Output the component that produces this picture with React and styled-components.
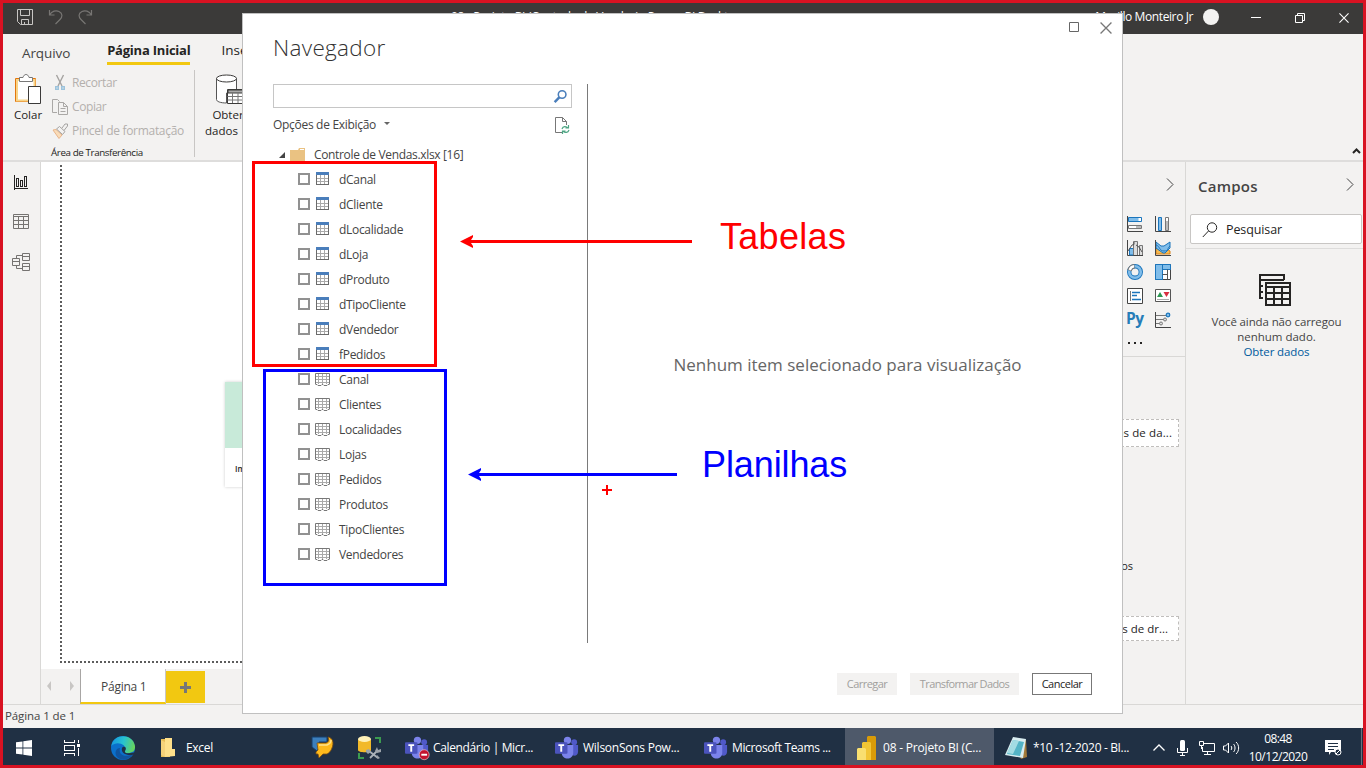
import React from "react";
import styled, { createGlobalStyle } from "styled-components";

const Global = createGlobalStyle`
  *{box-sizing:border-box}
  body{margin:0;overflow:hidden}
  svg{display:block;flex:none;overflow:visible}
`;
const Screen = styled.div`
  position:relative;width:1366px;height:768px;border:3px solid #d81222;overflow:hidden;
  display:flex;flex-direction:column;background:#f3f2f1;color:#252423;
  font-family:"Open Sans","Noto Sans",sans-serif;font-size:12px;
`;
const Text = styled.span`
  display:block;white-space:nowrap;flex:none;
  font-size:${p => p.$size || 12}px;line-height:${p => p.$lh || 16}px;
  letter-spacing:${p => p.$ls || 0}px;font-weight:${p => p.$weight || 400};
  color:${p => p.$color || "inherit"};
`;

/* Title bar */
const TitleBar = styled.header`
  height:31px;flex:none;background:#3b3a39;color:#fff;display:flex;align-items:center;padding-left:14px;
`;
const QuickAccess = styled.div`display:flex;align-items:center;gap:15px;width:198px;padding-bottom:3px;`;
const TitleText = styled.div`flex:1;padding:0 0 4px 236px;`;
const Account = styled.div`display:flex;align-items:center;gap:10px;padding-bottom:3px;`;
const Avatar = styled.div`width:16px;height:16px;border-radius:50%;background:#f3f2f1;`;
const WindowButtons = styled.div`display:flex;align-items:center;gap:34px;margin:0 14px 2px 32px;`;

/* Ribbon */
const Ribbon = styled.div`
  height:128px;flex:none;border-bottom:2px solid #dedddc;background:#f3f2f1;display:flex;flex-direction:column;
`;
const Tabs = styled.nav`display:flex;height:36px;padding:6px 0 0 19px;align-items:flex-start;`;
const Tab = styled.div`
  margin-right:${p => p.$gap || 0}px;padding-top:${p => p.$top || 0}px;height:25px;
  border-bottom:${p => p.$active ? "3px solid #f2c811" : "0"};
`;
const RibbonBody = styled.div`display:flex;flex:1;`;
const ClipboardGroup = styled.section`
  width:192px;height:87px;border-right:1px solid #c8c6c4;display:grid;grid-template-columns:49px 1fr;grid-template-rows:75px 1fr;
`;
const BigButton = styled.div`
  display:flex;flex-direction:column;align-items:center;padding-top:4px;width:${p => p.$w || 50}px;
  svg{margin:0 0 2px ${p => p.$shift || 0}px}
`;
const SmallCommands = styled.div`display:flex;flex-direction:column;color:#b3b0ad;padding-top:1px;`;
const SmallCommand = styled.div`display:flex;align-items:center;gap:4px;height:24px;`;
const GroupName = styled.div`grid-column:1 / 3;padding-left:48px;`;
const Collapse = styled.div`margin-left:auto;align-self:flex-end;padding:0 2px 6px 0;`;

/* Work area */
const Work = styled.main`height:542px;flex:none;display:flex;`;
const Rail = styled.aside`
  width:38px;flex:none;border-right:1px solid #d9d8d6;display:flex;flex-direction:column;align-items:center;padding:13px 2px 0 0;gap:24px;
`;
const Report = styled.section`width:959px;display:flex;flex-direction:column;background:#fff;`;
const Canvas = styled.div`height:507px;padding:3px 0 0 19px;`;
const ReportPage = styled.div`
  height:498px;padding:217px 0 0 165px;
  background:
    repeating-linear-gradient(to bottom,#5d5d5d 0 2px,transparent 2px 4px) left top / 2px 100% no-repeat,
    repeating-linear-gradient(to right,#5d5d5d 0 2px,transparent 2px 4px) left bottom / 100% 2px no-repeat;
`;
const StartCard = styled.div`width:160px;height:105px;background:#fff;border-top:66px solid #c8ead9;box-shadow:0 0 3px rgba(0,0,0,.2);padding:15px 0 0 10px;`;
const PageTabs = styled.div`height:35px;display:flex;background:#f3f2f1;`;
const PageArrows = styled.div`width:39px;display:flex;justify-content:space-between;padding:12px 5px 0 4px;`;
const PageTab = styled.div`width:86px;border-left:1px solid #a8a6a4;border-right:1px solid #c8c6c4;border-bottom:2px solid #f2c811;background:#fff;padding:10px 0 0 20px;`;
const AddPage = styled.div`width:39px;height:32px;margin-top:2px;background:#f2c811;display:grid;place-items:center;`;

const Visuals = styled.aside`width:186px;border-left:1px solid #d9d8d6;border-right:1px solid #d9d8d6;display:flex;flex-direction:column;flex:none;`;
const PaneTop = styled.div`height:53px;display:flex;justify-content:flex-end;padding:16px 11px 0 0;`;
const VisualGrid = styled.div`
  height:142px;border-bottom:1px solid #d9d8d6;display:grid;grid-template-columns:16px 16px;grid-auto-rows:16px;gap:8px 12px;justify-content:end;padding:1px 14px 0 0;
`;
const PyLabel = styled.div`margin:-2px 0 0 -1px;height:16px;`;
const Well = styled.div`
  height:${p => p.$h}px;margin:${p => p.$top}px 6px 0 10px;border:1px dashed #c0bebc;background:#fff;display:flex;align-items:center;justify-content:flex-end;padding-right:${p => p.$pad}px;
`;
const WellCaption = styled.div`margin:111px 52px 0 0;display:flex;justify-content:flex-end;`;

const Fields = styled.aside`flex:1;display:flex;flex-direction:column;`;
const FieldsHead = styled.div`height:51px;display:flex;justify-content:space-between;padding:12px 9px 0 12px;`;
const FieldsToggle = styled.div`padding-top:4px;`;
const FieldSearchRow = styled.div`height:36px;border-bottom:1px solid #dddcdb;padding:1px 1px 0 4px;`;
const FieldSearch = styled.div`height:30px;border:1px solid #c8c6c4;border-radius:2px;background:#fff;display:flex;align-items:center;gap:8px;padding:1px 0 0 11px;`;
const EmptyFields = styled.div`
  display:flex;flex-direction:column;align-items:center;padding:25px 0 0 4px;
  svg{margin:0 3px 7px 0}
`;

const Status = styled.footer`height:24px;flex:none;border-top:1px solid #d9d8d6;padding:3px 0 0 2px;background:#f3f2f1;`;

/* Navigator dialog */
const Dialog = styled.div`
  position:absolute;left:239px;top:10px;width:881px;height:701px;background:#fff;border:1px solid #c0c0c0;color:#444;
  display:flex;flex-direction:column;
`;
const DialogHead = styled.div`height:70px;display:flex;justify-content:space-between;padding:17px 10px 0 30px;`;
const DialogButtons = styled.div`display:flex;gap:20px;margin-top:-9px;`;
const DialogBody = styled.div`height:559px;display:flex;padding-left:30px;`;
const Tree = styled.div`width:315px;border-right:1px solid #7a7a7a;`;
const SearchBox = styled.div`width:299px;height:24px;border:1px solid #c6c6c6;display:flex;align-items:center;justify-content:flex-end;padding-right:4px;`;
const Options = styled.div`width:297px;height:34px;display:flex;align-items:center;`;
const OptionsCaret = styled.i`border:3px solid transparent;border-top-color:#666;margin:0 auto 0 8px;`;
const FileRow = styled.div`height:25px;display:flex;align-items:center;padding-left:6px;`;
const Leaf = styled.div`height:25px;display:flex;align-items:center;padding-left:25px;`;
const Checkbox = styled.span`width:12px;height:12px;border:2px solid #919191;margin:0 ${p => p.$sheet ? 5 : 6}px 1px 0;`;
const LeafIcon = styled.span`width:${p => p.$sheet ? 24 : 23}px;margin-bottom:${p => p.$sheet ? 0 : 2}px;`;
const Preview = styled.div`flex:1;display:flex;justify-content:center;padding:270px 15px 0 0;`;
const DialogFoot = styled.div`display:flex;justify-content:flex-end;gap:13px;padding:30px 30px 0 0;`;
const DialogButton = styled.div`
  width:${p => p.$w}px;height:22px;display:grid;place-items:center;
  background:${p => p.$primary ? "#fff" : "#f3f2f1"};color:${p => p.$primary ? "#252423" : "#a19f9d"};
  border:1px solid ${p => p.$primary ? "#777" : "#f3f2f1"};
`;

/* Drawn annotations */
const MarkBox = styled.div`
  position:absolute;left:${p => p.$x}px;top:${p => p.$y}px;width:${p => p.$w}px;height:${p => p.$h}px;border:3px solid ${p => p.$c};
`;
const MarkArrow = styled.svg`position:absolute;left:${p => p.$x}px;top:${p => p.$y}px;`;
const MarkText = styled.div`
  position:absolute;left:${p => p.$x}px;top:${p => p.$y}px;color:${p => p.$c};letter-spacing:${p => p.$ls || 0}px;
  font:36px/40px "Liberation Sans",Arial,sans-serif;white-space:nowrap;
`;

/* Taskbar */
const Taskbar = styled.footer`height:37px;flex:none;background:#203044;color:#fff;display:flex;`;
const Task = styled.div`
  width:${p => p.$w}px;flex:none;display:flex;align-items:center;gap:${p => p.$gap || 4}px;padding:2px 0 0 ${p => p.$pad || 0}px;
  background:${p => p.$active ? "#4e596a" : "transparent"};
`;
const Tray = styled.div`flex:1;display:flex;align-items:center;`;
const TrayItem = styled.div`width:${p => p.$w}px;flex:none;padding-top:2px;`;
const Clock = styled.div`width:66px;display:flex;flex-direction:column;align-items:center;padding-top:2px;`;
const ShowDesktop = styled.div`width:1px;height:37px;background:#66717e;margin-left:auto;margin-right:1px;`;

const Chevron = ({ color = "#444" }) => (
  <svg width="8" height="13" viewBox="0 0 8 13" fill="none" stroke={color}><path d="M1 .5l6 6-6 6" /></svg>
);
const Cross = ({ size = 11, color }) => (
  <svg width={size} height={size} viewBox="0 0 11 11" stroke={color} strokeWidth="1.2"><path d="M.5.5l10 10M10.5.5l-10 10" /></svg>
);
const SaveIcon = () => (
  <svg width="16" height="16" viewBox="0 0 16 16" fill="none" stroke="#c8c6c4"><path d="M.5.5h15v15h-12l-3-3zM3.5.5v6h9v-6M4.500 15v-4.500h7V15M7.500 13v2" /></svg>
);
const UndoIcon = ({ flip }) => (
  <svg width="15" height="16" viewBox="0 0 15 16" fill="none" stroke="#777573" strokeWidth="1.2">
    <path transform={flip ? "matrix(-1 0 0 1 15 0)" : undefined} d="M1.500 1v5h5M1.500 6C4 2 8 1 11 2.500c4 2 3.500 5.500 1 8L7.500 15" />
  </svg>
);
const PasteIcon = () => (
  <svg width="28" height="31" viewBox="0 0 28 31">
    <path d="M1.500 4.500h20v23h-20z" fill="#fff" stroke="#e3760c" /><path d="M3 6h17.500v20.500H3z" fill="none" stroke="#f8d488" strokeWidth="2" />
    <path d="M5.500 7.500v-4h3.500c1-4 5-4 6 0h3.500v4z" fill="#fff" stroke="#777" />
    <path d="M14 12h14v19h-14z" fill="#f3f2f1" />
    <path d="M14.500 12.500h12v17h-12z" fill="#fff" stroke="#3b3a39" />
  </svg>
);
const CutIcon = () => (
  <svg width="16" height="16" viewBox="0 0 16 16" fill="none"><path d="M4.500 0l5.500 11M11.500 0L6 11" stroke="#a5a3a1" strokeWidth="1.400" /><path d="M3.700 11.700h2.600v2.600H3.700zM9.700 11.700h2.600v2.600H9.700z" stroke="#9cc3dc" strokeWidth="1.400" /></svg>
);
const CopyIcon = () => (
  <svg width="16" height="16" viewBox="0 0 16 16" fill="none" stroke="#aaa8a6"><path d="M5 13.500H.5V.5h5l2 2M6.500 3.500h5l4 4v8h-9zM11.500 3.500v4h4M8.500 9.500h5M8.500 12.500h5" /></svg>
);
const BrushIcon = () => (
  <svg width="16" height="16" viewBox="0 0 16 16" fill="none"><path d="M1 7l3-.5 6 5.500-3 3.500z" fill="#f9dcb8" stroke="#e8b48a" /><path d="M4.500 6l3-2.500 5.500 5-2.500 3zM10 5l3-4h2.500v2L12 7.500" stroke="#a5a3a1" fill="#f3f2f1" /></svg>
);
const DatabaseIcon = () => (
  <svg width="30" height="31" viewBox="0 0 30 31" fill="none" stroke="#3b3a39">
    <path d="M1.500 4.500v21c0 2 4 3.500 10 3.500V19h10V4.500" fill="#fff" stroke="#555" /><ellipse cx="11.500" cy="4.500" rx="10" ry="3.500" fill="#fff" />
    <path d="M12.500 15.500h16v14h-16z" fill="#fff" /><path d="M13 16h15v3H13z" fill="#aaa" /><path d="M12.500 22.500h16M12.500 26h16M17.500 19v10M23 19v10" stroke="#777" />
  </svg>
);
const ReportIcon = () => (
  <svg width="14" height="15" viewBox="0 0 14 15" fill="none" stroke="#252423" shapeRendering="crispEdges"><path d="M.5 0v14.500M0 13.500h14M2.500 3.500h2v8h-2zM6.500 5.500h2v6h-2zM10.500 1.500h2v10h-2z" /></svg>
);
const DataIcon = () => (
  <svg width="16" height="15" viewBox="0 0 16 15" fill="none" stroke="#757371"><path d="M.5.5h15v14H.5zM.5 2.500h15M.5 6.500h15M.5 10.500h15M5.500 2.500v12M10.500 2.500v12" /></svg>
);
const ModelIcon = () => (
  <svg width="18" height="18" viewBox="0 0 18 18" fill="none" stroke="#757371"><path d="M.5 5.500h7v7h-7zM.5 8.500h7M10.500.5h7v7h-7zM10.500 3.500h7M10.500 10.500h7v7h-7zM10.500 13.500h7M4.500 5.500v-3h6M4.500 12.500v3h6" /></svg>
);
const Magnifier = ({ color, size = 16, heavy }) => (
  <svg width={size} height={size} viewBox="0 0 16 16" fill="none" stroke={color}><circle cx="10" cy="5.500" r="4.700" strokeWidth={heavy ? 1.900 : 1} /><path d="M6.500 9L.8 15" strokeWidth={heavy ? 3 : 1} /></svg>
);
const RefreshIcon = () => (
  <svg width="15" height="17" viewBox="0 0 15 17" fill="none"><path d="M7 15.500H.5V.5h7l4 4V8M7.500.5v4h4" stroke="#777" /><path d="M7 12c1-3 4-3 6-1M13.500 8v3h-3M14 13c-1 3-4 3-6 1M7.500 17v-3h3" stroke="#4da583" strokeWidth="1.200" /></svg>
);
const TableIcon = () => (
  <svg width="13" height="13" viewBox="0 0 13 13" fill="none" shapeRendering="crispEdges"><path d="M4.500 3v9M8.500 3v9M1 6.500h11M1 9.500h11" stroke="#aaa" /><path d="M.5 3v9.500h12V3" stroke="#6b6b6b" /><path d="M0 0h13v3H0z" fill="#4a7ebb" /></svg>
);
const SheetIcon = () => (
  <svg width="15" height="13" viewBox="0 0 15 13" fill="none"><path d="M3.500 1v10M7.500 1v10M11.500 1v10M1 3.500h13M1 6.500h13M1 9.500h13" stroke="#aaa" /><path d="M.5 11V.5h14V11M.5 11.500h1.500l1 1h3l1-1h1l1 1h3l1-1h1.500" stroke="#777" /></svg>
);
const FieldsIcon = () => (
  <svg width="32" height="33" viewBox="0 0 32 33" fill="none" stroke="#252423" strokeWidth="2" shapeRendering="crispEdges">
    <path d="M4 24H1V1h24v5M1 6h24M1 12h3M1 18h3M7 9h24v22H7zM7 13h24M7 19h24M7 25h24M15 13v18M23 13v18" />
  </svg>
);

const VI = ({ children }) => <svg width="16" height="16" viewBox="0 0 16 16" fill="none">{children}</svg>;
const visuals = [
  <VI key="1"><path d="M.5 0v15.500H16" stroke="#444" /><path d="M1.500 1.500h13v4h-13z" fill="#80bdea" stroke="#1b75bc" /><path d="M11.500 2h2.500v3h-2.500z" fill="#fff" /><path d="M1.500 9.500h13v3h-13z" fill="#fff" stroke="#777" /><path d="M9 10h5v2H9z" fill="#bbb" /></VI>,
  <VI key="2"><path d="M.5 0v15.500H16" stroke="#444" /><path d="M3.500 1.500h3v13h-3z" fill="#80bdea" stroke="#1b75bc" /><path d="M10.500 1.500h3v13h-3z" fill="#fff" stroke="#777" /><path d="M11 5h2v9h-2z" fill="#bbb" /></VI>,
  <VI key="3"><path d="M.5 0v15.500H16" stroke="#444" /><path d="M2.500 15V8.500h4V15z" fill="#80bdea" stroke="#1b75bc" /><path d="M6.500 15V1.500h4V15M12.500 15V5.500h3V15" fill="#ddd" stroke="#777" /><path d="M1 11l4-6 2-.5V2M9 5l3 2 3 5" stroke="#555" /></VI>,
  <VI key="4"><path d="M1 8l4 2 3-3 7 4v3H1z" fill="#f4ba55" stroke="#d98218" /><path d="M1 2l5 4h3l6-4v6l-5 5H8L1 8z" fill="#80bdea" stroke="#1b75bc" /><path d="M1 5c4 1 3 6 8 6s3-3 6-5" stroke="#1b75bc" /><path d="M.5 0v15.500H16" stroke="#444" /></VI>,
  <VI key="5"><circle cx="8" cy="8" r="5.800" stroke="#1b75bc" strokeWidth="4.400" /><circle cx="8" cy="8" r="5.800" stroke="#80bdea" strokeWidth="2.600" /><path d="M2.400 6.500C3.200 4 5 2.500 7.500 2.200" stroke="#777" strokeWidth="4.400" /><path d="M2.700 6C3.400 4 5 2.500 7 2.300" stroke="#fff" strokeWidth="2.500" /></VI>,
  <VI key="6"><path d="M.5.5h15v15H.5z" fill="#fff" stroke="#444" /><path d="M.5.5h7v15h-7zM7.500.5h8v5h-8z" fill="#80bdea" stroke="#1b75bc" /><path d="M7.500 10.500h5M12.500 5.500v10" stroke="#555" /></VI>,
  <VI key="7"><path d="M.5.5h15v15H.5z" fill="#fff" stroke="#444" /><path d="M3.500 3v10" stroke="#777" /><path d="M5 4.500h8M5 7.500h5M5 11.500h9" stroke="#1b75bc" strokeWidth="1.500" /></VI>,
  <VI key="8"><path d="M.5 1.500h15v12H.5z" fill="#fff" stroke="#555" /><path d="M2 9l3-5 3 5z" fill="#2d9852" /><path d="M8.500 4h6l-3 5z" fill="#d92f41" /><path d="M2 11.500h12" stroke="#aaa" /></VI>,
  <PyLabel key="9"><Text $size={15.5} $weight={700} $color="#267db8" $ls={-.5}>Py</Text></PyLabel>,
  <VI key="10"><path d="M.5 0v15.500H16" stroke="#444" /><path d="M1 3.500h10M1 7.500h8M1 11.500h4" stroke="#777" /><circle cx="13" cy="3" r="1.800" fill="#80bdea" stroke="#1b75bc" strokeWidth="1.200" /><circle cx="10" cy="7.500" r="1.500" fill="#ddd" stroke="#777" /><circle cx="6" cy="11.500" r="1.500" fill="#ddd" stroke="#777" /></VI>,
  <svg key="11" width="16" height="16" fill="#252423"><path d="M1 6h2v2H1zM7 6h2v2H7zM13 6h2v2h-2z" /></svg>,
];

const TeamsIcon = ({ busy }) => (
  <svg width="24" height="24" viewBox="0 0 25 24">
    <circle cx="20" cy="6" r="3" fill="#5059c9" /><circle cx="13" cy="4" r="3.800" fill="#7b83eb" />
    <path d="M16 9h8v7c0 5-6 5-7 2z" fill="#5059c9" /><path d="M7 9h12v8c0 8-12 8-12 0z" fill="#7b83eb" />
    <rect y="6" width="13" height="12" rx="1" fill="#4b53bc" /><path d="M3.500 9h6M6.500 9v7" stroke="#fff" strokeWidth="2" />
    {busy && <><circle cx="20" cy="19" r="5.200" fill="#c4122f" stroke="#e8c4ca" strokeWidth=".7" /><path d="M17 19h6" stroke="#fff" strokeWidth="2" /></>}
  </svg>
);
const WinIcon = () => <svg width="16" height="16" viewBox="0 0 16 16" fill="#fff"><path d="M0 2.300L6.500 1.400v6.200H0zM7.300 1.300L16 0v7.600H7.300zM0 8.400h6.500v6.200L0 13.700zM7.300 8.400H16V16l-8.700-1.300z" /></svg>;
const TaskViewIcon = () => <svg width="16" height="16" viewBox="0 0 16 16" fill="none" stroke="#fff" shapeRendering="crispEdges"><path d="M.5 0v2.500h10V0M.5 5.500h10v5H.5zM.5 16v-2.500h10V16M14.500 0v3M14.500 8v8" /><path d="M13 4h3v3h-3z" fill="#fff" stroke="none" /></svg>;
const EdgeIcon = () => (
  <svg width="24" height="24" viewBox="0 0 24 24">
    <defs><linearGradient id="edgeTop" x1="0" x2="1" y1=".3" y2=".5"><stop stopColor="#1697e0" /><stop offset=".5" stopColor="#28c3d0" /><stop offset="1" stopColor="#69d45a" /></linearGradient></defs>
    <circle cx="12" cy="12" r="12" fill="#0b70cb" />
    <path d="M.3 10C2-3 22-3 24 10c.5 5-3 7-7 7-4 .5-4-1.500-2.500-3C16 9 6 4 .3 10z" fill="url(#edgeTop)" />
    <path d="M9 12c-2 7 5 10 13 6-4 7-12 7-16 3-3-4-1-9 3-9z" fill="#10549f" />
    <path d="M11 12c1-2 5-1.500 3.500 2-1.500 2 0 3.500 3 3.200 3 0 5-.5 6.500-1.200l-1.500 2.500c-5.500 2-13-1-11.500-6.500z" fill="#203044" />
  </svg>
);
const FolderIcon = () => <svg width="14" height="19" viewBox="0 0 14 19"><path d="M0 1h8l1 1v17H0z" fill="#e8bd55" /><path d="M4 0h7v11h3v7l-10 1z" fill="#ffe08a" /><path d="M0 2l4 2v15l-4-2z" fill="#f6d27a" /></svg>;
const AppArrowIcon = () => (
  <svg width="23" height="23" viewBox="0 0 23 23">
    <path d="M1 1h15v5H8v6l-2 3-5-4z" fill="#3c7fbd" stroke="#173f6b" />
    <path d="M6 7h9c3-1 3-3 2-6 5 1 6 6 4 11-1 3-3 5-5 6h-4l-4 4-1-4H5v-2l2-2z" fill="#fdb91c" stroke="#7c4d10" strokeWidth=".8" />
    <path d="M8 9h8c3-1 4-3 4-5" fill="none" stroke="#ffe28a" strokeWidth="1.500" />
  </svg>
);
const SqlToolIcon = () => (
  <svg width="24" height="24" viewBox="0 0 24 24"><path d="M0 3v11c0 3 13 3 13 0V3z" fill="#f2b929" /><ellipse cx="6.500" cy="3" rx="6.500" ry="3" fill="#fff1b8" /><path d="M17 2h5v5M1 17v5h5" fill="none" stroke="#3b9b50" strokeWidth="2" /><path d="M12 22l8-8M11 15l9 7" stroke="#aab1b8" strokeWidth="1.800" /><path d="M8 14l3-1 2 3-3 2-2-2M19 11l1 3 3-1v3l-4 1-2-2zM19 19l3 3-2 1-2-2z" fill="#9ca3aa" /></svg>
);
const PowerBiIcon = () => <svg width="20" height="24" viewBox="0 0 20 24"><path d="M10 1l1-1h7l1 1v23h-9z" fill="#d99b08" /><path d="M5 7l1-1h7l1 1v17H5z" fill="#f2c535" /><path d="M0 13l1-1h7l1 1v11H0z" fill="#f9df70" /></svg>;
const NotepadIcon = () => <svg width="23" height="22" viewBox="0 0 23 22"><path d="M8 1l13 2 1 17-6 2z" fill="#a37a3a" /><path d="M8 0l13 2-3 19L0 18z" fill="#d9edf0" /><path d="M8 3l11 2-4 14-13-2z" fill="#54b4c6" /><path d="M8 3l6 1-6 13-6-1z" fill="#a3dce3" /></svg>;

const tables = ["dCanal", "dCliente", "dLocalidade", "dLoja", "dProduto", "dTipoCliente", "dVendedor", "fPedidos"];
const sheets = ["Canal", "Clientes", "Localidades", "Lojas", "Pedidos", "Produtos", "TipoClientes", "Vendedores"];

function Item({ name, sheet }) {
  return <Leaf><Checkbox $sheet={sheet} /><LeafIcon $sheet={sheet}>{sheet ? <SheetIcon /> : <TableIcon />}</LeafIcon><Text $ls={-.3}>{name}</Text></Leaf>;
}

function Navigator() {
  return (
    <Dialog>
      <DialogHead>
        <Text $size={22.5} $lh={34} $weight={300} $ls={.3} $color="#333">Navegador</Text>
        <DialogButtons>
          <svg width="11" height="11" fill="none" stroke="#666"><path d="M.5.500h9v9H.5z" /></svg>
          <Cross size={12} color="#777" />
        </DialogButtons>
      </DialogHead>
      <DialogBody>
        <Tree>
          <SearchBox><Magnifier color="#4a7ebb" size={13} heavy /></SearchBox>
          <Options><Text $ls={-.3}>Opções de Exibição</Text><OptionsCaret /><RefreshIcon /></Options>
          <FileRow>
            <svg width="11" height="6"><path d="M6 0v6H0z" fill="#444" /></svg>
            <svg width="24" height="14"><path d="M0 2h8l1-2h6v13H0z" fill="#eac282" /><path d="M10 1.500h4" stroke="#fff" /></svg>
            <Text $ls={-.34}>Controle de Vendas.xlsx [16]</Text>
          </FileRow>
          {tables.map(name => <Item key={name} name={name} />)}
          {sheets.map(name => <Item key={name} name={name} sheet />)}
        </Tree>
        <Preview><Text $size={17} $lh={22} $color="#666">Nenhum item selecionado para visualização</Text></Preview>
      </DialogBody>
      <DialogFoot>
        <DialogButton $w={60}><Text $size={11} $ls={-.55}>Carregar</Text></DialogButton>
        <DialogButton $w={109}><Text $size={11} $ls={-.62}>Transformar Dados</Text></DialogButton>
        <DialogButton $w={60} $primary><Text $size={11} $ls={-.5}>Cancelar</Text></DialogButton>
      </DialogFoot>
    </Dialog>
  );
}

export default function App() {
  return (
    <>
      <Global />
      <Screen>
        <TitleBar>
          <QuickAccess><SaveIcon /><UndoIcon /><UndoIcon flip /></QuickAccess>
          <TitleText><Text $ls={-.3}>08 - Projeto BI (Controle de Vendas) - Power BI Desktop</Text></TitleText>
          <Account><Text $size={12} $ls={-.4}>Murillo Monteiro Jr</Text><Avatar /></Account>
          <WindowButtons>
            <svg width="10" height="1"><path d="M0 0h10v1H0z" fill="#fff" /></svg>
            <svg width="10" height="10" viewBox="0 0 10 10" fill="none" stroke="#fff"><path d="M.5 2.500h7v7h-7zM2.500 2.500v-2h7v7h-2" /></svg>
            <Cross color="#fff" size={10} />
          </WindowButtons>
        </TitleBar>

        <Ribbon>
          <Tabs>
            <Tab $gap={37} $top={5}><Text $size={13.5} $ls={-.1} $color="#444">Arquivo</Text></Tab>
            <Tab $gap={31} $active $top={2}><Text $size={13} $weight={700} $ls={-.22}>Página Inicial</Text></Tab>
            <Tab $top={2}><Text $size={13.5}>Inserir</Text></Tab>
          </Tabs>
          <RibbonBody>
            <ClipboardGroup>
              <BigButton><PasteIcon /><Text $size={11.5}>Colar</Text></BigButton>
              <SmallCommands>
                <SmallCommand><CutIcon /><Text $ls={-.4}>Recortar</Text></SmallCommand>
                <SmallCommand><CopyIcon /><Text $ls={-.4}>Copiar</Text></SmallCommand>
                <SmallCommand><BrushIcon /><Text $ls={-.3}>Pincel de formatação</Text></SmallCommand>
              </SmallCommands>
              <GroupName><Text $size={9.8} $ls={-.4}>Área de Transferência</Text></GroupName>
            </ClipboardGroup>
            <BigButton $w={66} $shift={4}><DatabaseIcon /><Text $size={11.5}>Obter</Text><Text $size={11.5}>dados ⌄</Text></BigButton>
            <Collapse><svg width="9" height="6" fill="none" stroke="#252423" strokeWidth="2"><path d="M1 5l3.500-3.500L8 5" /></svg></Collapse>
          </RibbonBody>
        </Ribbon>

        <Work>
          <Rail><ReportIcon /><DataIcon /><ModelIcon /></Rail>
          <Report>
            <Canvas><ReportPage><StartCard><Text $size={8} $lh={12} $weight={600}>Importar dados do Excel</Text></StartCard></ReportPage></Canvas>
            <PageTabs>
              <PageArrows>
                <svg width="6" height="10"><path d="M6 0v10L2 5z" fill="#c8c6c4" /></svg>
                <svg width="6" height="10"><path d="M1 0v10l4-5z" fill="#c8c6c4" /></svg>
              </PageArrows>
              <PageTab><Text $ls={-.25} $color="#444">Página 1</Text></PageTab>
              <AddPage><svg width="11" height="11"><path d="M4 0h3v4h4v3H7v4H4V7H0V4h4z" fill="#777" /></svg></AddPage>
            </PageTabs>
          </Report>
          <Visuals>
            <PaneTop><Chevron /></PaneTop>
            <VisualGrid>{visuals}</VisualGrid>
            <Well $h={28} $top={62} $pad={6}><Text $size={11.5} $ls={.1}>Adicione campos de da...</Text></Well>
            <WellCaption><Text $size={11}>Manter todos os filtros</Text></WellCaption>
            <Well $h={25} $top={42} $pad={10}><Text $size={11.5}>Adicione campos de dr...</Text></Well>
          </Visuals>
          <Fields>
            <FieldsHead><Text $size={15} $lh={24} $weight={600} $ls={.25} $color="#444">Campos</Text><FieldsToggle><Chevron /></FieldsToggle></FieldsHead>
            <FieldSearchRow><FieldSearch><Magnifier color="#252423" /><Text $size={12.5} $ls={-.1}>Pesquisar</Text></FieldSearch></FieldSearchRow>
            <EmptyFields>
              <FieldsIcon />
              <Text $lh={15} $size={11.5} $ls={-.12} $color="#444">Você ainda não carregou</Text>
              <Text $lh={15} $size={11.5} $color="#444">nenhum dado.</Text>
              <Text $lh={15} $size={11.5} $ls={-.1} $color="#005a9e">Obter dados</Text>
            </EmptyFields>
          </Fields>
        </Work>

        <Status><Text $size={11.5} $ls={-.1} $color="#444">Página 1 de 1</Text></Status>

        <Taskbar>
          <Task $w={48} $pad={13}><WinIcon /></Task>
          <Task $w={48} $pad={13}><TaskViewIcon /></Task>
          <Task $w={50} $pad={12}><EdgeIcon /></Task>
          <Task $w={151} $pad={12} $gap={11}><FolderIcon /><Text $ls={-.3}>Excel</Text></Task>
          <Task $w={47} $pad={11}><AppArrowIcon /></Task>
          <Task $w={47} $pad={11}><SqlToolIcon /></Task>
          <Task $w={150} $pad={11}><TeamsIcon busy /><Text $ls={-.36}>Calendário | Micr...</Text></Task>
          <Task $w={150} $pad={11}><TeamsIcon /><Text $ls={-.25}>WilsonSons Pow...</Text></Task>
          <Task $w={151} $pad={10}><TeamsIcon /><Text $ls={-.36}>Microsoft Teams ...</Text></Task>
          <Task $w={149} $pad={12} $gap={6} $active><PowerBiIcon /><Text $ls={-.2}>08 - Projeto BI (C...</Text></Task>
          <Task $w={159} $pad={11} $gap={5}><NotepadIcon /><Text $ls={-.35}>*10 -12-2020 - BI...</Text></Task>
          <Tray>
            <TrayItem $w={24}><svg width="12" height="7" fill="none" stroke="#fff" strokeWidth="1.300"><path d="M.5 6.500L6 1l5.500 5.500" /></svg></TrayItem>
            <TrayItem $w={22}><svg width="11" height="16" fill="none" stroke="#fff"><rect x="3" y="0" width="5" height="11" rx="1.500" fill="#fff" stroke="none" /><path d="M.5 8v4.500h10V8M5.500 13v2.500M3 15.500h5" /></svg></TrayItem>
            <TrayItem $w={24}><svg width="16" height="14" fill="none" stroke="#fff"><path d="M5 2.500h10.500v8h-12V6M8.500 10.500v3M5 13.500h7M.5.5h4v4h-4zM2.500 5v3" /></svg></TrayItem>
            <TrayItem $w={22}><svg width="17" height="14" fill="none" stroke="#fff"><path d="M.5 5v4h2l3 3V2l-3 3zM8 5c1 1 1 3 0 4M10.500 3c2 2 2 6 0 8M13 1c3.500 3 3.500 9 0 12" /></svg></TrayItem>
            <Clock><Text $lh={18} $ls={-.6}>08:48</Text><Text $lh={18} $ls={-.5}>10/12/2020</Text></Clock>
            <TrayItem $w={32}><svg width="32" height="16"><path d="M14 0h16v12H20l-2 3v-3h-4z" fill="#fff" /><path d="M17 3.500h10M17 6.500h10M17 9.500h6" stroke="#203044" /><circle cx="27" cy="12" r="3" fill="#203044" stroke="#fff" /><path d="M25 14l4-4" stroke="#fff" /></svg></TrayItem>
            <ShowDesktop />
          </Tray>
        </Taskbar>

        <Navigator />

        <MarkBox $x={249} $y={158} $w={185} $h={206} $c="#f00" />
        <MarkBox $x={260} $y={366} $w={184} $h={217} $c="#00f" />
        <MarkArrow $x={457} $y={231} width="232" height="15"><path d="M6 7.500h226" stroke="#f00" strokeWidth="3" /><path d="M0 7.500L13 1v2l-3 4.500 3 4.500v2z" fill="#f00" /></MarkArrow>
        <MarkArrow $x={465} $y={464} width="209" height="15"><path d="M6 7.500h203" stroke="#00f" strokeWidth="3" /><path d="M0 7.500L13 1v2l-3 4.500 3 4.500v2z" fill="#00f" /></MarkArrow>
        <MarkText $x={717} $y={214} $ls={.3} $c="#f00">Tabelas</MarkText>
        <MarkText $x={699} $y={442} $ls={-.1} $c="#00f">Planilhas</MarkText>
        <MarkArrow $x={599} $y={482} width="10" height="10"><path d="M4 0h2v4h4v2H6v4H4V6H0V4h4z" fill="#f00" /></MarkArrow>
      </Screen>
    </>
  );
}
